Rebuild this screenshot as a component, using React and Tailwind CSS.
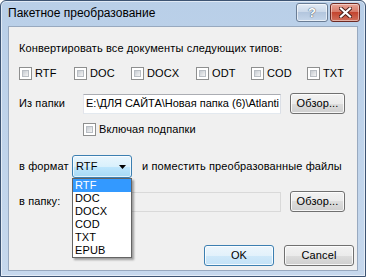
import React from 'react';

const CheckBox = () => (
  <span className="flex w-[13px] h-[13px] shrink-0 border border-[#8e8f8f] bg-white p-[2px]">
    <span className="flex-1 bg-linear-to-br from-[#c7ccd2] to-[#f4f4f4] border border-[#b9bec4]" />
  </span>
);

const Check = ({ label, className = '' }) => (
  <div className={`flex items-center gap-[3px] ${className}`}>
    <CheckBox />
    <span className="leading-[13px]">{label}</span>
  </div>
);

const Button = ({ children, className = '', isDefault = false }) => (
  <div
    className={`flex items-center justify-center rounded-[3px] border ${
      isDefault
        ? 'border-[#3c7fb1] bg-[linear-gradient(#edf6fc,#e2f1fb_50%,#cfe8f9_50%,#c3e2f7)]'
        : 'border-[#707070] bg-[linear-gradient(#f2f2f2,#ebebeb_50%,#dddddd_50%,#cfcfcf)]'
    } shadow-[inset_0_0_0_1px_rgba(255,255,255,0.8)] ${className}`}
  >
    {children}
  </div>
);

const formats = ['RTF', 'DOC', 'DOCX', 'COD', 'TXT', 'EPUB'];

export default function App() {
  return (
    <div className="w-[366px] h-[277px] overflow-hidden bg-white">
      <div className="w-[366px] h-[277px] flex flex-col rounded-t-[6px] border border-[#3d5473] bg-linear-to-b from-[#b9cfe8] to-[#c6d8ed] shadow-[inset_0_0_0_1px_rgba(255,255,255,0.55)] px-[7px] pb-[5px] font-['Liberation_Sans',sans-serif] text-black">
        {/* Title bar */}
        <div className="h-[25px] shrink-0 flex items-start">
          <div className="pt-[5px] text-[12px] leading-[15px] text-[#000]">Пакетное преобразование</div>
          <div className="ml-auto flex gap-[2px] mr-[-2px]">
            <div className="w-[32px] h-[19px] mt-[2px] rounded-[3px] border border-[#6a7d95] bg-[linear-gradient(#e3ebf5,#cbd9ea_45%,#b3c6de_50%,#c5d6ea)] shadow-[inset_0_0_0_1px_rgba(255,255,255,0.6)] flex items-center justify-center">
              <span className="text-[13px] font-bold leading-none text-white [text-shadow:0_0_1px_#3a4a5e,0_0_1px_#3a4a5e]">?</span>
            </div>
            <div className="w-[30px] h-[19px] mt-[2px] rounded-[3px] border border-[#6d2a23] bg-[linear-gradient(#e8a496,#d77b6a_45%,#c4452f_50%,#d0705c)] shadow-[inset_0_0_0_1px_rgba(255,255,255,0.45)] flex items-center justify-center">
              <svg width="13" height="11" viewBox="0 0 13 11">
                <path d="M2 1.5 L11 9.5 M11 1.5 L2 9.5" stroke="#4a1e18" strokeWidth="4" strokeLinecap="square" />
                <path d="M2 1.5 L11 9.5 M11 1.5 L2 9.5" stroke="#ffffff" strokeWidth="2.2" strokeLinecap="square" />
              </svg>
            </div>
          </div>
        </div>

        {/* Client area */}
        <div className="flex-1 flex flex-col bg-[#f0f0f0] border border-[#98a9bf] text-[11px] tracking-[0.12px] pl-[10px]">
          <div className="mt-[15px] h-[13px] leading-[13px]">Конвертировать все документы следующих типов:</div>

          <div className="mt-[12px] flex">
            <Check label="RTF" className="w-[55px]" />
            <Check label="DOC" className="w-[57px]" />
            <Check label="DOCX" className="w-[65px]" />
            <Check label="ODT" className="w-[55px]" />
            <Check label="COD" className="w-[56px]" />
            <Check label="TXT" />
          </div>

          <div className="mt-[13px] flex items-center h-[21px]">
            <div className="w-[64px]">Из папки</div>
            <div className="w-[198px] h-[20px] flex items-center pl-[2px] tracking-normal bg-white border border-[#abadb3] border-b-[#e3e9ef] border-l-[#e2e3ea] border-r-[#dbdfe6] overflow-hidden whitespace-nowrap">
              E:\ДЛЯ САЙТА\Новая папка (6)\Atlanti
            </div>
            <Button className="ml-[9px] w-[55px] h-[21px]">Обзор...</Button>
          </div>

          <Check label="Включая подпапки" className="mt-[9px] ml-[64px]" />

          <div className="mt-[19px] flex items-center h-[23px]">
            <div className="w-[53px]">в формат</div>
            <div className="relative">
              <div className="w-[60px] h-[23px] flex items-center rounded-[3px] border border-[#3c7fb1] bg-[linear-gradient(#eaf6fd,#d9f0fc_50%,#bee6fd_50%,#a7d9f5)] shadow-[inset_0_0_0_1px_rgba(255,255,255,0.7)] pl-[3px]">
                <span>RTF</span>
                <svg className="ml-auto mr-[5px]" width="7" height="4" viewBox="0 0 7 4">
                  <path d="M0 0 H7 L3.5 4 Z" fill="#000" />
                </svg>
              </div>
              <div className="absolute left-0 top-[23px] w-[60px] bg-white border border-[#646464] shadow-[2px_2px_2px_rgba(0,0,0,0.35)] z-10">
                {formats.map((f, i) => (
                  <div
                    key={f}
                    className={`h-[13px] leading-[13px] pl-[2px] ${i === 0 ? 'bg-[#3399ff] text-white' : ''}`}
                  >
                    {f}
                  </div>
                ))}
              </div>
            </div>
            <div className="ml-[10px]">и поместить преобразованные файлы</div>
          </div>

          <div className="mt-[13px] flex items-center h-[21px]">
            <div className="w-[64px]">в папку:</div>
            <div className="w-[198px] h-[20px] bg-[#f0f0f0] border border-[#d9d9d9]" />
            <Button className="ml-[9px] w-[55px] h-[21px]">Обзор...</Button>
          </div>

          <div className="mt-[33px] flex">
            <Button isDefault className="ml-[185px] w-[70px] h-[21px]">OK</Button>
            <Button className="ml-[10px] w-[70px] h-[21px]">Cancel</Button>
          </div>
        </div>
      </div>
    </div>
  );
}
